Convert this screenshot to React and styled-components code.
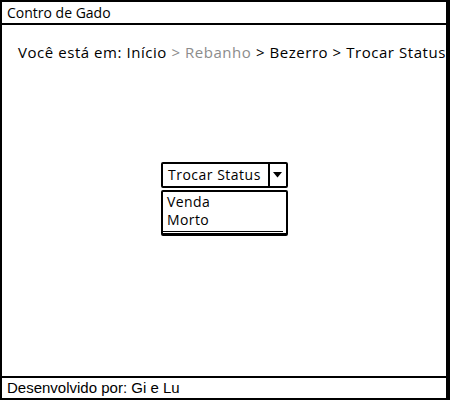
import React from "react";
import styled, { createGlobalStyle } from "styled-components";

const Global = createGlobalStyle`
  html, body { margin: 0; padding: 0; background: #fff; }
  * { box-sizing: border-box; }
`;

const Frame = styled.div`
  width: 450px;
  height: 400px;
  border: 2px solid #000;
  display: flex;
  background: #fff;
`;

const Column = styled.div`
  flex: 1;
  margin-right: 1px;
  border-right: 2px solid #000;
  display: flex;
  flex-direction: column;
`;

const Sketch = `"Open Sans", "Noto Sans", sans-serif`;

const Header = styled.div`
  height: 23px;
  border-bottom: 2px solid #000;
  padding-left: 5px;
  font-family: ${Sketch};
  font-size: 14px;
  line-height: 21px;
  color: #000;
`;

const Main = styled.div`
  flex: 1;
  display: flex;
  flex-direction: column;
  align-items: center;
`;

const Breadcrumb = styled.div`
  align-self: flex-start;
  margin-top: 16px;
  padding-left: 16px;
  font-family: ${Sketch};
  font-size: 15px;
  letter-spacing: 0.55px;
  line-height: 22px;
  white-space: nowrap;
  color: #000;
`;

const Crumb = styled.span`
  color: ${(p) => (p.$muted ? "#8c8c8c" : "#000")};
`;

const Select = styled.div`
  margin-top: 99px;
  margin-left: 1px;
  width: 127px;
  display: flex;
  flex-direction: column;
  gap: 2px;
`;

const Combo = styled.div`
  height: 26px;
  display: flex;
  border: 2px solid #000;
  border-radius: 2px;
`;

const ComboLabel = styled.div`
  flex: 1;
  border-right: 2px solid #000;
  padding-left: 5px;
  font-family: ${Sketch};
  font-size: 14px;
  letter-spacing: 0.5px;
  line-height: 22px;
`;

const Arrow = styled.div`
  width: 16px;
  display: flex;
  align-items: center;
  justify-content: center;
`;

const List = styled.div`
  height: 46px;
  border: 2px solid #000;
  border-bottom-width: 3px;
  border-radius: 2px;
  padding: 1px 4px 0 4px;
  font-family: ${Sketch};
  font-size: 14px;
  letter-spacing: 0.4px;
  line-height: 18px;
  position: relative;
`;

const Underline = styled.div`
  position: absolute;
  left: 0;
  right: 3px;
  bottom: 1px;
  height: 1px;
  background: #000;
`;

const Footer = styled.div`
  height: 22px;
  border-top: 2px solid #000;
  padding-left: 5px;
  font-family: "Liberation Sans", Arial, sans-serif;
  font-size: 15px;
  line-height: 19px;
  color: #000;
`;

export default function App() {
  return (
    <>
      <Global />
      <Frame>
        <Column>
          <Header>Contro de Gado</Header>
          <Main>
            <Breadcrumb>
              <Crumb>Você está em: Início </Crumb>
              <Crumb $muted>&gt; Rebanho</Crumb>
              <Crumb> &gt; Bezerro &gt; Trocar Status</Crumb>
            </Breadcrumb>
            <Select>
              <Combo>
                <ComboLabel>Trocar Status</ComboLabel>
                <Arrow>
                  <svg width="9" height="6" viewBox="0 0 9 6">
                    <path d="M0 0 H9 L4.5 5.5 Z" fill="#000" />
                  </svg>
                </Arrow>
              </Combo>
              <List>
                <div>Venda</div>
                <div>Morto</div>
                <Underline />
              </List>
            </Select>
          </Main>
          <Footer>Desenvolvido por: Gi e Lu</Footer>
        </Column>
      </Frame>
    </>
  );
}
